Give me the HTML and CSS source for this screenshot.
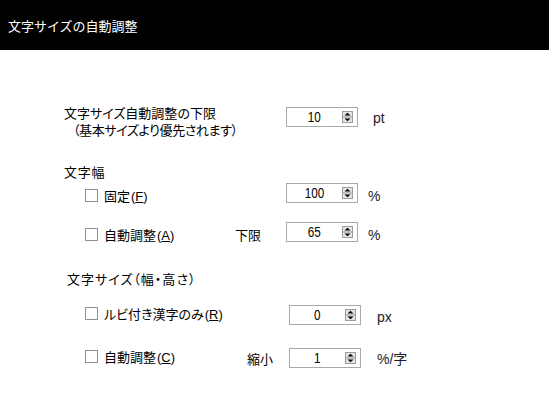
FILE: index.html
```html
<!doctype html>
<html lang="ja">
<head>
  <meta charset="utf-8">
  <title>文字サイズの自動調整</title>
  <link rel="stylesheet" href="styles.css">
</head>
<body>
  <header class="title">文字サイズの自動調整</header>

  <main class="panel">
    <div class="limit">
      <div class="limit__label">
        文字サイズ自動調整の下限<br>
        <span class="limit__note">（基本サイズより優先されます）</span>
      </div>
      <div class="spin">
        <span class="spin__val"><span>10</span></span>
        <svg class="spin__btn" width="11" height="12" viewBox="0 0 11 12"><rect x="0.5" y="0.5" width="10" height="11" fill="#e4e4e4" stroke="#9c9c9c"/><line x1="1" y1="6" x2="10" y2="6" stroke="#9c9c9c"/><path d="M2.5 4.5h6L5.5 1.8z" fill="#000"/><path d="M2.5 7.5h6L5.5 10.2z" fill="#000"/></svg>
      </div>
      <span class="unit unit--pt">pt</span>
    </div>

    <section class="group group--width">
      <h2 class="group__title">文字幅</h2>
      <div class="opt">
        <label class="check"><span class="check__box"></span><span>固定<span class="key">(<u>F</u>)</span></span></label>
        <span class="sub"></span>
        <div class="spin">
          <span class="spin__val"><span>100</span></span>
          <svg class="spin__btn" width="11" height="12" viewBox="0 0 11 12"><rect x="0.5" y="0.5" width="10" height="11" fill="#e4e4e4" stroke="#9c9c9c"/><line x1="1" y1="6" x2="10" y2="6" stroke="#9c9c9c"/><path d="M2.5 4.5h6L5.5 1.8z" fill="#000"/><path d="M2.5 7.5h6L5.5 10.2z" fill="#000"/></svg>
        </div>
        <span class="unit">%</span>
      </div>
      <div class="opt opt--auto">
        <label class="check"><span class="check__box"></span><span>自動調整<span class="key">(<u>A</u>)</span></span></label>
        <span class="sub">下限</span>
        <div class="spin">
          <span class="spin__val"><span>65</span></span>
          <svg class="spin__btn" width="11" height="12" viewBox="0 0 11 12"><rect x="0.5" y="0.5" width="10" height="11" fill="#e4e4e4" stroke="#9c9c9c"/><line x1="1" y1="6" x2="10" y2="6" stroke="#9c9c9c"/><path d="M2.5 4.5h6L5.5 1.8z" fill="#000"/><path d="M2.5 7.5h6L5.5 10.2z" fill="#000"/></svg>
        </div>
        <span class="unit">%</span>
      </div>
    </section>

    <section class="group group--size">
      <h2 class="group__title">文字サイズ（幅・高さ）</h2>
      <div class="opt opt--ruby">
        <label class="check"><span class="check__box"></span><span>ルビ付き漢字のみ<span class="key">(<u>R</u>)</span></span></label>
        <span class="sub"></span>
        <div class="spin">
          <span class="spin__val"><span>0</span></span>
          <svg class="spin__btn" width="11" height="12" viewBox="0 0 11 12"><rect x="0.5" y="0.5" width="10" height="11" fill="#e4e4e4" stroke="#9c9c9c"/><line x1="1" y1="6" x2="10" y2="6" stroke="#9c9c9c"/><path d="M2.5 4.5h6L5.5 1.8z" fill="#000"/><path d="M2.5 7.5h6L5.5 10.2z" fill="#000"/></svg>
        </div>
        <span class="unit unit--px">px</span>
      </div>
      <div class="opt opt--shrink">
        <label class="check"><span class="check__box"></span><span>自動調整<span class="key">(<u>C</u>)</span></span></label>
        <span class="sub">縮小</span>
        <div class="spin">
          <span class="spin__val"><span>1</span></span>
          <svg class="spin__btn" width="11" height="12" viewBox="0 0 11 12"><rect x="0.5" y="0.5" width="10" height="11" fill="#e4e4e4" stroke="#9c9c9c"/><line x1="1" y1="6" x2="10" y2="6" stroke="#9c9c9c"/><path d="M2.5 4.5h6L5.5 1.8z" fill="#000"/><path d="M2.5 7.5h6L5.5 10.2z" fill="#000"/></svg>
        </div>
        <span class="unit">%/字</span>
      </div>
    </section>
  </main>
</body>
</html>
```

FILE: styles.css
```css
html {
  height: 100%;
  background-color: #fff;
}

body {
  margin: 0;
  min-height: 100%;
  font-family: "Noto Sans CJK JP", sans-serif;
  font-size: 13px;
  color: #000;
}

.title {
  height: 50px;
  padding-left: 8px;
  display: flex;
  align-items: center;
  background-color: #000;
  color: #fff;
  font-size: 13px;
}

.panel {
  padding-top: 54px;
  padding-bottom: 30px;
  font-feature-settings: "palt";
}

/* top row: two line label + spin box */
.limit {
  display: grid;
  grid-template-columns: 222px 72px auto;
  align-items: start;
  padding-left: 64px;
  line-height: 17px;
}

.limit__note {
  padding-left: 9px;
  letter-spacing: -0.4px;
}

.limit .spin {
  margin-top: 3px;
}

.unit--pt {
  margin-top: 6px;
  margin-left: 15px !important;
}

.group__title {
  margin: 26px 0 0 64px;
  font-size: 13px;
  font-weight: normal;
  line-height: 16px;
  letter-spacing: 0.8px;
}

.group--size .group__title {
  margin: 32px 0 0 67px;
  letter-spacing: 1px;
}

.opt {
  display: grid;
  grid-template-columns: 150px 51px 72px auto;
  align-items: center;
  height: 20px;
  padding-left: 85px;
}

.opt--auto {
  margin-top: 19px;
}

.group--size .opt {
  grid-template-columns: 162px 42px 72px auto;
}

.opt--ruby {
  margin-top: 17px;
}

.opt--shrink {
  margin-top: 23px;
}

.group--width .check,
.group--width .sub,
.group--width .unit {
  margin-top: 6px;
}

.opt--ruby .check,
.opt--shrink .check {
  margin-bottom: 3px;
}

.opt--ruby .unit {
  margin-top: 4px;
}

.check {
  display: flex;
  align-items: center;
  gap: 6px;
}

.check__box {
  width: 13px;
  height: 13px;
  box-sizing: border-box;
  border: 1px solid #919191;
  background-color: #fff;
}

.key {
  margin-left: 1px;
  font-family: "Liberation Sans", sans-serif;
  font-size: 13px;
}

.key u {
  text-underline-offset: 1px;
}

.spin {
  display: flex;
  align-items: center;
  height: 20px;
  box-sizing: border-box;
  border: 1px solid #a9a9a9;
  background-color: #fff;
}

.spin__val {
  flex: 1;
  text-align: center;
  font-family: "Liberation Sans", sans-serif;
  font-size: 15px;
  line-height: 18px;
}

.spin__val span {
  display: inline-block;
  transform: scaleX(0.78);
}

.spin__btn {
  margin-right: 4px;
}

.unit {
  margin-left: 10px;
  font-family: "Liberation Sans", sans-serif;
  font-size: 14px;
  color: #1c1c2c;
}

.group--size .unit {
  margin-left: 16px;
}

.opt--shrink .unit {
  font-family: "Liberation Sans", "Noto Sans CJK JP", sans-serif;
}
```
